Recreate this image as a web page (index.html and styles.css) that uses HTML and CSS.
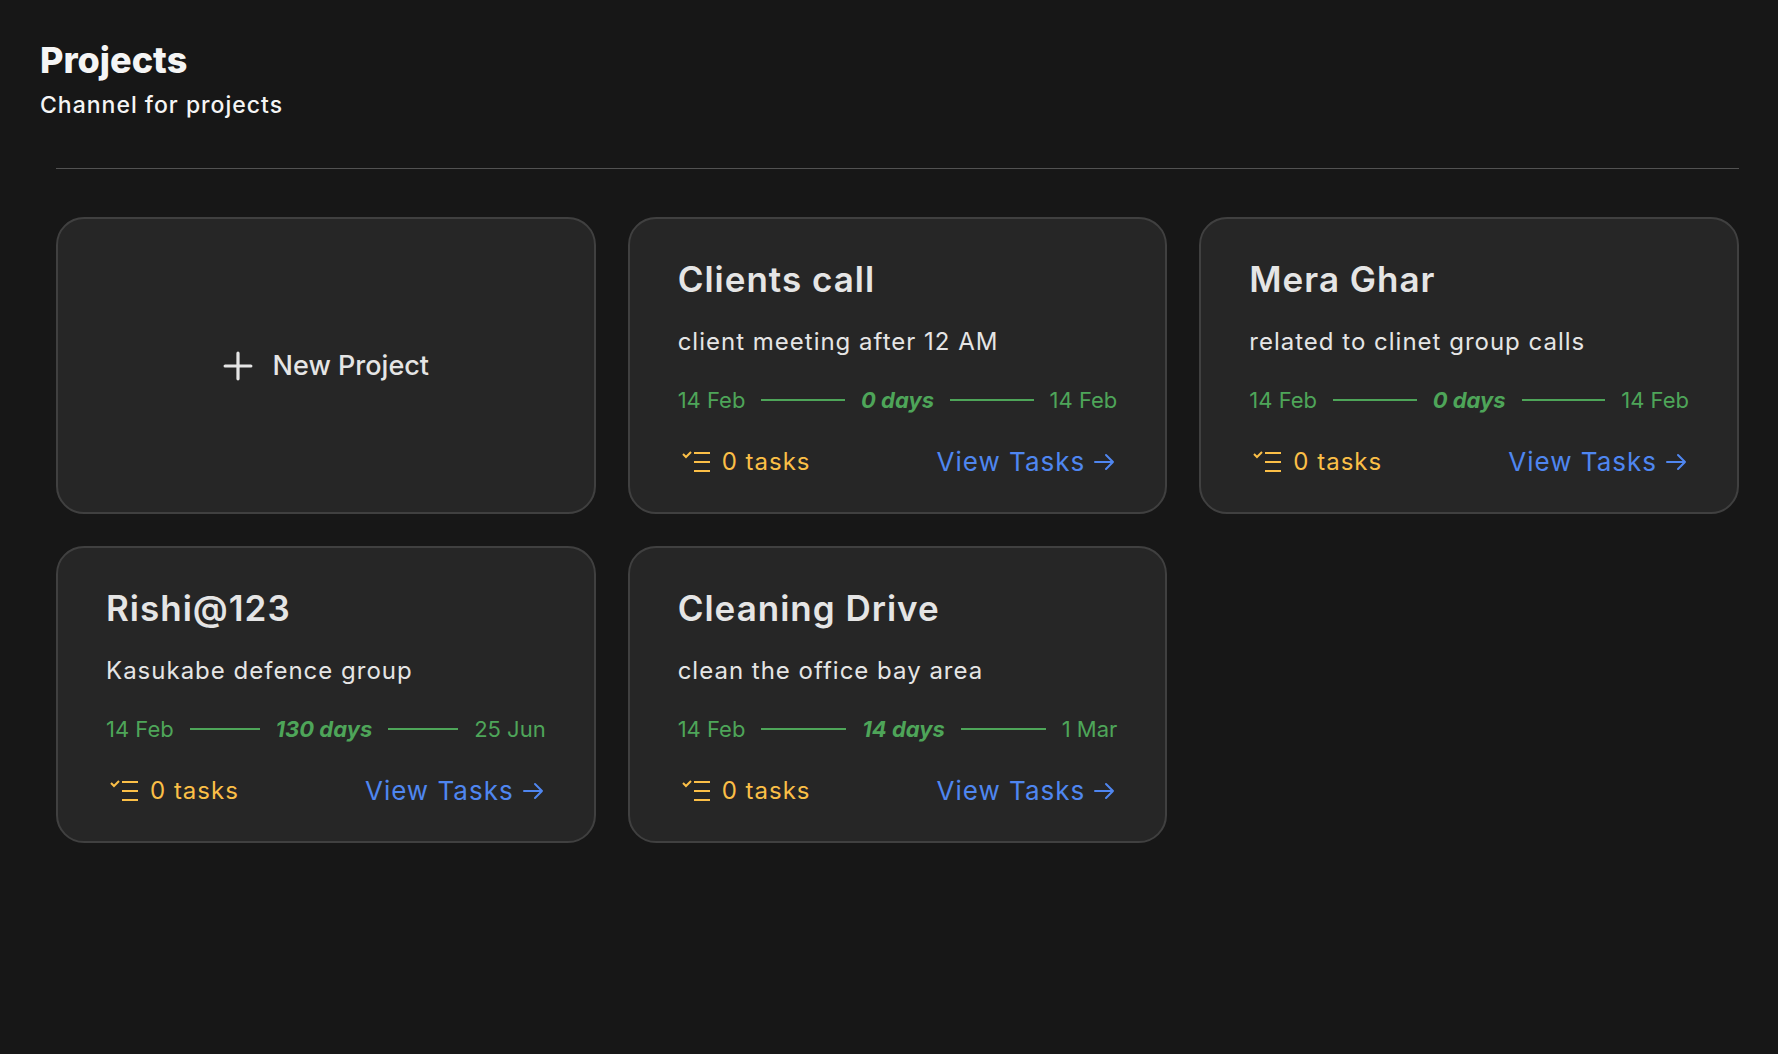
FILE: index.html
```
<!DOCTYPE html>
<html lang="en">
<head>
<meta charset="utf-8">
<title>Projects</title>
<link rel="stylesheet" href="styles.css">
</head>
<body>
<svg class="sprite" aria-hidden="true">
  <symbol id="tasks" viewBox="0 0 34 24"><path d="M5 4l3 3 5-5M16 3h16M16 12h16M16 21h16"/></symbol>
  <symbol id="arrow" viewBox="0 0 24 24"><path d="M2 12h18M13 5l7 7-7 7"/></symbol>
</svg>
<header class="page-header">
  <h1>Projects</h1>
  <p>Channel for projects</p>
</header>
<main class="content">
  <div class="grid">
    <button class="card new-project" type="button">
      <svg class="plus" viewBox="0 0 28 28" aria-hidden="true"><path d="M14 2v24M2 14h24"/></svg>
      <span>New Project</span>
    </button>
    <article class="card">
      <h2>Clients call</h2>
      <p class="description">client meeting after 12 AM</p>
      <div class="timeline"><span>14 Feb</span><i class="line"></i><em>0 days</em><i class="line"></i><span>14 Feb</span></div>
      <footer class="card-footer">
        <span class="tasks"><svg class="tasks-icon" aria-hidden="true"><use href="#tasks"/></svg>0 tasks</span>
        <a class="view" href="#">View Tasks<svg class="arrow" aria-hidden="true"><use href="#arrow"/></svg></a>
      </footer>
    </article>
    <article class="card">
      <h2>Mera Ghar</h2>
      <p class="description">related to clinet group calls</p>
      <div class="timeline"><span>14 Feb</span><i class="line"></i><em>0 days</em><i class="line"></i><span>14 Feb</span></div>
      <footer class="card-footer">
        <span class="tasks"><svg class="tasks-icon" aria-hidden="true"><use href="#tasks"/></svg>0 tasks</span>
        <a class="view" href="#">View Tasks<svg class="arrow" aria-hidden="true"><use href="#arrow"/></svg></a>
      </footer>
    </article>
    <article class="card">
      <h2>Rishi@123</h2>
      <p class="description">Kasukabe defence group</p>
      <div class="timeline"><span>14 Feb</span><i class="line"></i><em>130 days</em><i class="line"></i><span>25 Jun</span></div>
      <footer class="card-footer">
        <span class="tasks"><svg class="tasks-icon" aria-hidden="true"><use href="#tasks"/></svg>0 tasks</span>
        <a class="view" href="#">View Tasks<svg class="arrow" aria-hidden="true"><use href="#arrow"/></svg></a>
      </footer>
    </article>
    <article class="card">
      <h2>Cleaning Drive</h2>
      <p class="description">clean the office bay area</p>
      <div class="timeline"><span>14 Feb</span><i class="line"></i><em>14 days</em><i class="line"></i><span>1 Mar</span></div>
      <footer class="card-footer">
        <span class="tasks"><svg class="tasks-icon" aria-hidden="true"><use href="#tasks"/></svg>0 tasks</span>
        <a class="view" href="#">View Tasks<svg class="arrow" aria-hidden="true"><use href="#arrow"/></svg></a>
      </footer>
    </article>
  </div>
</main>
</body>
</html>
```
FILE: styles.css
```
* { box-sizing: border-box; }
body {
  margin: 0;
  padding: 40px 39px 40px 40px;
  background: #171717;
  color: #e5e5e5;
  font-family: Inter, "Liberation Sans", sans-serif;
}
h1, h2, p { margin: 0; font-weight: inherit; }
svg { fill: none; stroke: currentColor; stroke-width: 2; }
.sprite { display: none; }
.page-header { color: #f5f5f5; }
h1 { font-size: 36px; line-height: 40px; font-weight: 800; }
.page-header p { margin-top: 7px; font-size: 23px; line-height: 36px; font-weight: 500; letter-spacing: 1px; }
.content { margin: 45px 0 0 16px; padding-top: 48px; border-top: 1px solid #525252; }
.grid { display: grid; grid-template-columns: repeat(3, minmax(0, 1fr)); gap: 32px; }
.card {
  padding: 36px 48px 32px;
  border: 2px solid #404040;
  border-radius: 28px;
  background: #262626;
}
.new-project {
  display: flex;
  align-items: center;
  justify-content: center;
  gap: 20px;
  padding-block: 0;
  color: inherit;
  font: 500 27px/40px Inter, "Liberation Sans", sans-serif;
  cursor: pointer;
}
.plus { width: 30px; height: 30px; stroke-width: 3; stroke-linecap: round; }
h2 { font-size: 35px; line-height: 48px; font-weight: 600; letter-spacing: 1px; }
.description { margin-top: 21px; font-size: 24px; line-height: 36px; letter-spacing: 1px; }
.timeline { display: flex; align-items: center; gap: 16px; margin-top: 24px; color: #4ea559; font-size: 22px; line-height: 32px; }
.timeline em { font-weight: 700; }
.line { flex: 1; height: 2px; background: currentColor; }
.card-footer { display: flex; align-items: center; justify-content: space-between; margin-top: 28px; font-size: 26px; line-height: 36px; letter-spacing: 1px; }
.tasks { display: flex; align-items: center; gap: 10px; color: #fbbf47; font-size: 24px; }
.tasks-icon { width: 34px; height: 24px; }
.view { display: flex; align-items: center; gap: 8px; color: #4f86f0; text-decoration: none; }
.arrow { width: 24px; height: 24px; stroke-linecap: round; stroke-linejoin: round; }
```
